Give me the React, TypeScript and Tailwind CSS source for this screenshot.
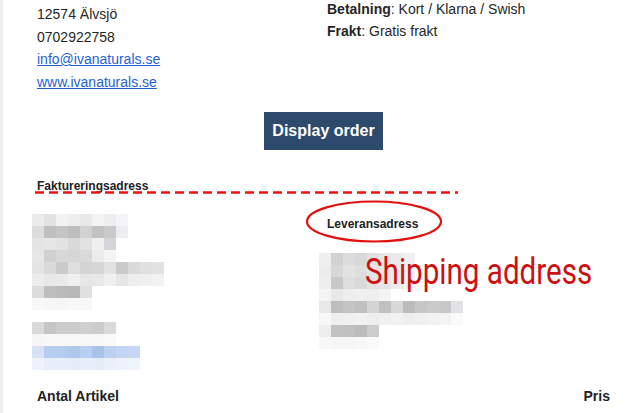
const leftMosaic: string[][] = [
  ["bg-[#ececec]", "bg-[#e2e2e2]", "bg-[#f2f2f2]", "bg-[#eeeeee]", "bg-[#e8e8e8]", "bg-[#f4f4f4]", "bg-[#eeeeee]", "bg-[#f5f5f7]"],
  ["bg-[#dcdcdc]", "bg-[#bfbfbf]", "bg-[#c4c4c4]", "bg-[#bdbdbd]", "bg-[#d2d2d2]", "bg-[#c2c2c2]", "bg-[#c9c9cc]", "bg-[#eeeef2]"],
  ["bg-[#e4e4e4]", "bg-[#e6e6e6]", "bg-[#e2e2e2]", "bg-[#dadada]", "bg-[#e2e2e2]", "bg-[#f0f0f0]", "bg-[#d6d6da]"],
  ["bg-[#e6e6e6]", "bg-[#d0d0d0]", "bg-[#d8d8d8]", "bg-[#d6d6d6]", "bg-[#dadada]", "bg-[#ececec]", "bg-[#f4f4f6]"],
  ["bg-[#e4e4e4]", "bg-[#dadada]", "bg-[#cacaca]", "bg-[#dedede]", "bg-[#d4d4d4]", "bg-[#d6d6d6]", "bg-[#e2e2e2]", "bg-[#cacaca]", "bg-[#dadada]", "bg-[#e0e0e0]", "bg-[#e2e2e2]"],
  ["bg-[#ececec]", "bg-[#e8e8e8]", "bg-[#eaeaea]", "bg-[#f0f0f0]", "bg-[#e6e6e6]", "bg-[#e8e8e8]", "bg-[#f0f0f0]", "bg-[#e6e6e6]", "bg-[#eeeeee]", "bg-[#f0f0f0]", "bg-[#f2f2f2]"],
  ["bg-[#dcdcdc]", "bg-[#bebebe]", "bg-[#bababa]", "bg-[#b8b8b8]", "bg-[#e0e0e0]"],
  ["bg-[#f8f8f8]", "bg-[#f6f6f6]", "bg-[#f6f6f6]", "bg-[#f8f8f8]", "bg-[#f8f8f8]"],
  [],
  ["bg-[#dadada]", "bg-[#c6c6c6]", "bg-[#cccccc]", "bg-[#cccccc]", "bg-[#d0d0d0]", "bg-[#cccccc]", "bg-[#d8dadc]"],
  ["bg-[#f6f6f6]", "bg-[#f8f8f8]", "bg-[#f8f8f8]", "bg-[#f8f8f8]", "bg-[#f8f8f8]", "bg-[#f8f8f8]", "bg-[#fafafa]"],
  ["bg-[#d6e1f4]", "bg-[#b6cdf0]", "bg-[#b4ccef]", "bg-[#b0c8ee]", "bg-[#b9cef0]", "bg-[#a9c2ec]", "bg-[#bcd0f2]", "bg-[#c4d5f4]", "bg-[#c6d6f4]"],
  ["bg-[#eef2fa]", "bg-[#e8eef9]", "bg-[#e8eef9]", "bg-[#e6edf9]", "bg-[#e8eef9]", "bg-[#e6edf9]", "bg-[#eaf0fa]", "bg-[#eef2fb]", "bg-[#f0f4fb]"],
];

const rightMosaic: string[][] = [
  ["bg-[#efefef]", "bg-[#d2d2d2]", "bg-[#dcdcdc]", "bg-[#d8d8d8]", "bg-[#e0e0e0]", "bg-[#e6e6e6]", "bg-[#eaeaea]", "bg-[#f0f0f0]"],
  ["bg-[#ececec]", "bg-[#d8d8d8]", "bg-[#e2e2e2]", "bg-[#dedede]", "bg-[#e4e4e4]", "bg-[#e8e8e8]", "bg-[#ececec]", "bg-[#f2f2f2]"],
  ["bg-[#eeeeee]", "bg-[#c8c8c8]", "bg-[#dedede]", "bg-[#dadada]", "bg-[#e2e2e2]", "bg-[#e6e6e6]", "bg-[#ececec]", "bg-[#f2f2f2]"],
  ["bg-[#f4f4f4]", "bg-[#e8e8e8]", "bg-[#eeeeee]", "bg-[#f0f0f0]", "bg-[#eeeeee]", "bg-[#f4f4f4]"],
  ["bg-[#e8e8e8]", "bg-[#bebebe]", "bg-[#c4c4c4]", "bg-[#c0c0c0]", "bg-[#d4d4d4]", "bg-[#c0c0c0]", "bg-[#d8d8d8]", "bg-[#bcbcbc]", "bg-[#c6c6c6]", "bg-[#cacaca]", "bg-[#c8c8c8]", "bg-[#e2e2e6]"],
  ["bg-[#f8f8f8]", "bg-[#eeeeee]", "bg-[#f0f0f0]", "bg-[#f2f2f2]", "bg-[#eeeeee]", "bg-[#f0f0f0]", "bg-[#f2f2f2]", "bg-[#eeeeee]", "bg-[#f0f0f0]", "bg-[#f2f2f2]", "bg-[#f4f4f4]", "bg-[#fafafa]"],
  ["bg-[#eeeeee]", "bg-[#c2c2c2]", "bg-[#c0c0c0]", "bg-[#bcbcbc]", "bg-[#cccccc]"],
  ["bg-[#f8f8f8]", "bg-[#f6f6f6]", "bg-[#f6f6f6]", "bg-[#f8f8f8]", "bg-[#fafafa]"],
];

// blurred-out address block
function Mosaic({ rows }: { rows: string[][] }) {
  return (
    <div className="flex flex-col">
      {rows.map((row, i) => (
        <div key={i} className="flex h-3">
          {row.map((c, j) => (
            <div key={j} className={`w-3 h-3 ${c}`} />
          ))}
        </div>
      ))}
    </div>
  );
}

export default function App() {
  return (
    <div className="relative flex min-h-[413px] bg-white font-['Liberation_Sans',Arial,sans-serif] text-[#262626] overflow-hidden">
      <div className="w-[3px] shrink-0 bg-[#efefef]" />

      <div className="flex-1 pl-[34px] pr-[30px]">
        {/* shop info */}
        <div className="grid grid-cols-[290px_1fr] text-[14px] leading-[22.5px]">
          <div className="pt-[3px]">
            <p>12574 Älvsjö</p>
            <p>0702922758</p>
            <p><a href="#" className="text-[#1f5fd6] underline">info@ivanaturals.se</a></p>
            <p><a href="#" className="text-[#1f5fd6] underline">www.ivanaturals.se</a></p>
          </div>
          <div className="-mt-[2px] leading-[22px]">
            <p><span className="font-bold">Betalning</span>: Kort / Klarna / Swish</p>
            <p><span className="font-bold">Frakt</span>: Gratis frakt</p>
          </div>
        </div>

        <div className="flex justify-center mt-[19px]">
          <button className="bg-[#2d4a6d] text-white font-bold text-[16px] leading-5 px-2 py-[9px]">
            Display order
          </button>
        </div>

        {/* addresses */}
        <div className="grid grid-cols-[290px_1fr] mt-[29px]">
          <div>
            <h3 className="text-[12px] leading-[15px] font-bold text-[#222]">Faktureringsadress</h3>
            <div className="mt-[20px] -ml-[5px]">
              <Mosaic rows={leftMosaic} />
            </div>
          </div>
          <div className="mt-[38px]">
            <h3 className="text-[12px] leading-[15px] font-bold text-[#222]">Leveransadress</h3>
            <div className="mt-[21px] -ml-[8px]">
              <Mosaic rows={rightMosaic} />
            </div>
          </div>
        </div>

        <div className="flex justify-between mt-[16px] text-[14px] leading-5 font-bold text-[#222]">
          <span>Antal Artikel</span>
          <span>Pris</span>
        </div>
      </div>

      {/* annotations */}
      <svg className="absolute left-0 top-0 pointer-events-none" width="640" height="413">
        <line x1="35" y1="192.5" x2="458" y2="192.5" stroke="#ee1111" strokeWidth="2.5" strokeDasharray="9 5" />
        <ellipse cx="374" cy="221.5" rx="67" ry="20" fill="none" stroke="#e41010" strokeWidth="2.2" />
      </svg>
      <span className="absolute left-[365px] top-[253px] origin-left scale-x-[0.8] whitespace-nowrap font-['Roboto',sans-serif] text-[37px] leading-[37px] text-[#cc1010]">
        Shipping address
      </span>
    </div>
  );
}
